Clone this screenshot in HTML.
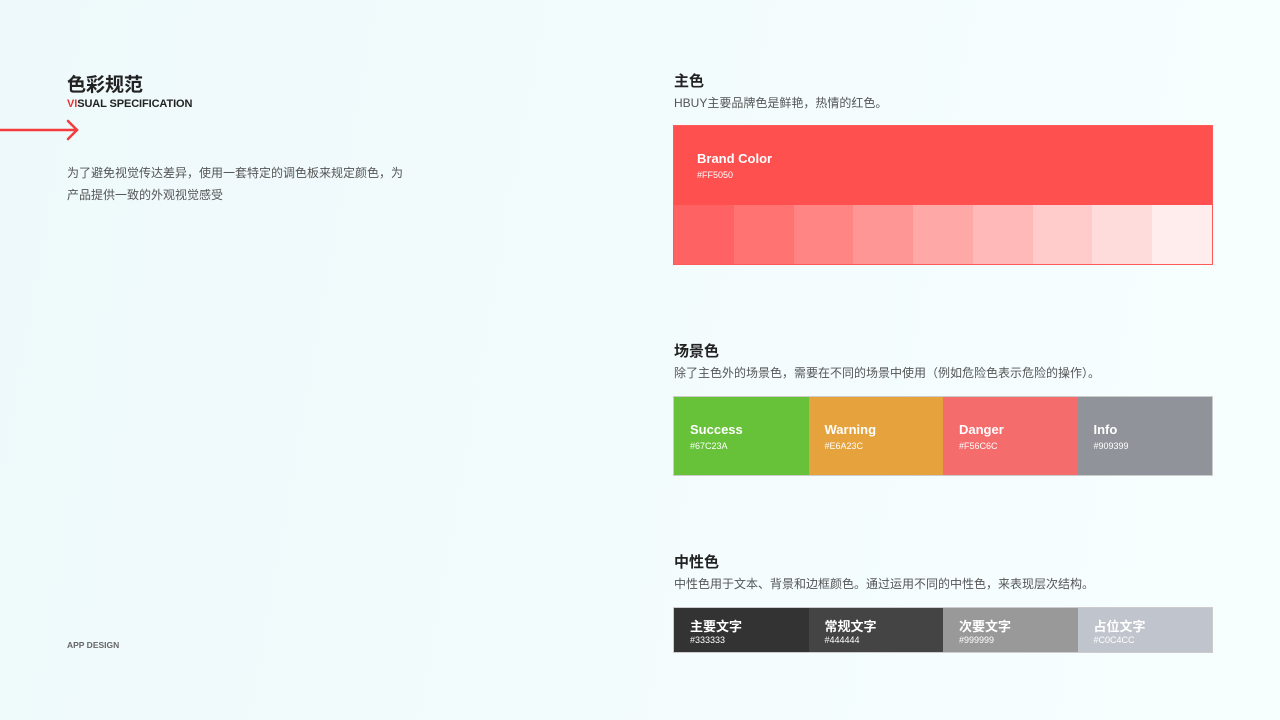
<!DOCTYPE html>
<html><head><meta charset="utf-8">
<style>
*{margin:0;padding:0;box-sizing:border-box}
body{width:1280px;height:720px;overflow:hidden;position:relative;font-family:"Liberation Sans","Noto Sans CJK SC",sans-serif;background:linear-gradient(100deg,#eef9fb 0%,#f3fcfd 50%,#f7fefe 100%);color:#333}
.a{position:absolute}
h1{font-size:19px;font-weight:700;color:#222}
h2{font-size:15px;font-weight:700;color:#222}
.d{font-size:12px;color:#555}
.sw{position:absolute;color:#fff}
.sw b{display:block;font-size:13px;font-weight:700}
.sw i{display:block;font-style:normal;font-size:9px;margin-top:4px}
</style></head><body>
<div class="a" style="left:67px;top:70px"><h1>色彩规范</h1></div>
<div class="a" style="left:67px;top:98px;font-size:11px;font-weight:700;color:#222;letter-spacing:-0.1px"><span style="color:#f03030">VI</span>SUAL SPECIFICATION</div>
<svg class="a" style="left:0;top:118px" width="82" height="24"><path d="M0 12H77M68 3L77 12L68 21" stroke="#f53c3c" stroke-width="2.5" fill="none" stroke-linecap="round"/></svg>
<div class="a d" style="left:67px;top:162px;width:345px;line-height:22px">为了避免视觉传达差异，使用一套特定的调色板来规定颜色，为产品提供一致的外观视觉感受</div>
<div class="a" style="left:67px;top:640px;font-size:8.5px;font-weight:700;color:#666">APP DESIGN</div>

<div class="a" style="left:674px;top:70px"><h2>主色</h2></div>
<div class="a d" style="left:674px;top:94px">HBUY主要品牌色是鲜艳，热情的红色。</div>
<div class="a" style="left:673px;top:125px;width:540px;height:140px;border:1px solid #ff5a5a">
<div style="height:79px;background:#ff5050;position:relative"><div class="sw" style="left:23px;top:25px"><b>Brand Color</b><i>#FF5050</i></div></div>
<div style="display:flex;height:59px">
<div style="flex:1;background:#ff6262"></div><div style="flex:1;background:#ff7373"></div><div style="flex:1;background:#ff8585"></div><div style="flex:1;background:#ff9696"></div><div style="flex:1;background:#ffa8a8"></div><div style="flex:1;background:#ffb9b9"></div><div style="flex:1;background:#ffcbcb"></div><div style="flex:1;background:#ffdcdc"></div><div style="flex:1;background:#ffeded"></div>
</div></div>

<div class="a" style="left:674px;top:340px"><h2>场景色</h2></div>
<div class="a d" style="left:674px;top:364px">除了主色外的场景色，需要在不同的场景中使用（例如危险色表示危险的操作）。</div>
<div class="a" style="left:673px;top:396px;width:540px;height:80px;display:flex;border:1px solid #ccc">
<div style="flex:1;background:#67c23a;position:relative"><div class="sw" style="left:16px;top:25px"><b>Success</b><i>#67C23A</i></div></div>
<div style="flex:1;background:#e6a23c;position:relative"><div class="sw" style="left:16px;top:25px"><b>Warning</b><i>#E6A23C</i></div></div>
<div style="flex:1;background:#f56c6c;position:relative"><div class="sw" style="left:16px;top:25px"><b>Danger</b><i>#F56C6C</i></div></div>
<div style="flex:1;background:#909399;position:relative"><div class="sw" style="left:16px;top:25px"><b>Info</b><i>#909399</i></div></div>
</div>

<div class="a" style="left:674px;top:551px"><h2>中性色</h2></div>
<div class="a d" style="left:674px;top:575px">中性色用于文本、背景和边框颜色。通过运用不同的中性色，来表现层次结构。</div>
<div class="a" style="left:673px;top:607px;width:540px;height:46px;display:flex;border:1px solid #ccc">
<div style="flex:1;background:#333;position:relative"><div class="sw" style="left:16px;top:8px"><b>主要文字</b><i style="margin-top:0">#333333</i></div></div>
<div style="flex:1;background:#444;position:relative"><div class="sw" style="left:16px;top:8px"><b>常规文字</b><i style="margin-top:0">#444444</i></div></div>
<div style="flex:1;background:#999;position:relative"><div class="sw" style="left:16px;top:8px"><b>次要文字</b><i style="margin-top:0">#999999</i></div></div>
<div style="flex:1;background:#c0c4cc;position:relative"><div class="sw" style="left:16px;top:8px"><b>占位文字</b><i style="margin-top:0">#C0C4CC</i></div></div>
</div>
</body></html>
